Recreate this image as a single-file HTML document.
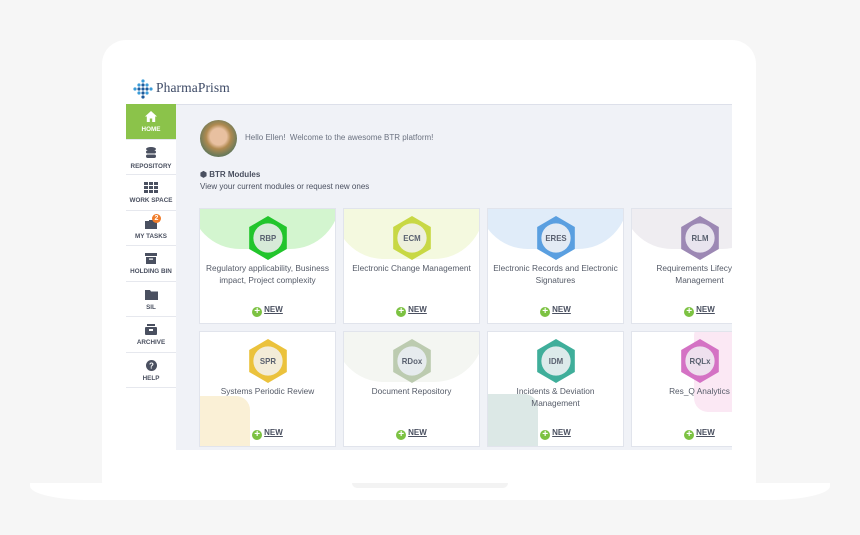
<!DOCTYPE html>
<html><head><meta charset="utf-8"><style>
*{margin:0;padding:0;box-sizing:border-box}
body{width:860px;height:535px;background:#f6f6f6;position:relative;overflow:hidden;font-family:"Liberation Sans",sans-serif;color:#5a6170}
.abs{position:absolute}
.lap{left:102px;top:40px;width:654px;height:446px;background:#fff;border-radius:24px 24px 4px 4px}
.base{left:30px;top:483px;width:800px;height:17px;background:#fff;border-radius:0 0 60px 60px/0 0 14px 14px}
.notch{left:352px;top:483px;width:156px;height:5px;background:#f3f3f3;border-radius:0 0 10px 10px}
.screenbg{left:176px;top:104px;width:556px;height:346px;background:#f0f2f7;border-top:1px solid #dde0ea}
.side{left:126px;top:104px;width:50px}
.si{height:35.5px;border-bottom:1px solid #e6e8ee;text-align:center;font-size:6.3px;font-weight:bold;color:#4a5060;padding-top:7px;position:relative;background:#fff}
.si.on{background:#8bc34a;color:#fff}
.si svg{display:block;margin:0 auto 4px}
.card{position:absolute;width:137px;height:116px;background:#fff;border:1px solid #e1e4ec;overflow:hidden}
.card .lbl{position:absolute;left:0;right:0;top:54px;text-align:center;font-size:8.3px;line-height:11.5px;color:#555b68;padding:0 4px}
.card .new{position:absolute;left:0;right:0;top:96px;text-align:center;font-size:8px;font-weight:bold;color:#4a5060}
.card .new span{text-decoration:underline}
.card .pl{display:inline-block;width:10px;height:10px;border-radius:50%;background:#7cc242;color:#fff;font-size:10px;line-height:10px;vertical-align:-2px;margin-right:2px;text-decoration:none!important}
.hx{position:absolute;left:47px;top:6px}
</style></head><body>
<div class="abs lap"></div>
<div class="abs base"></div>
<div class="abs notch"></div>
<svg class="abs" style="left:133px;top:79px" width="20" height="20" viewBox="0 0 20 20">
<g fill="#3a9bd8"><circle cx="10" cy="2" r="1.6"/><circle cx="6" cy="6" r="1.6"/><circle cx="14" cy="6" r="1.6"/><circle cx="2" cy="10" r="1.6"/><circle cx="18" cy="10" r="1.6"/><circle cx="6" cy="14" r="1.6"/><circle cx="14" cy="14" r="1.6"/></g>
<g fill="#1f5a9a"><circle cx="10" cy="6" r="1.6"/><circle cx="6" cy="10" r="1.6"/><circle cx="10" cy="10" r="1.6"/><circle cx="14" cy="10" r="1.6"/><circle cx="10" cy="14" r="1.6"/><circle cx="10" cy="18" r="1.6"/></g></svg>
<div class="abs" style="left:156px;top:80px;font-family:'Liberation Serif',serif;font-size:13.5px;color:#3d4a66;letter-spacing:0.1px">PharmaPrism</div>
<div class="abs screenbg"></div>
<div class="abs side">
<div class="si on"><svg width="12" height="11" viewBox="0 0 12 11"><path d="M6 0L0 5.5h1.8V11h3V7.5h2.4V11h3V5.5H12z" fill="#fff"/></svg>HOME</div>
<div class="si"><svg width="10" height="12" viewBox="0 0 10 12"><g fill="#4a5060"><ellipse cx="5" cy="2" rx="5" ry="2"/><rect x="0" y="3.5" width="10" height="3" rx="1.5"/><rect x="0" y="7.5" width="10" height="3.5" rx="1.7"/></g></svg>REPOSITORY</div>
<div class="si"><svg width="14" height="11" viewBox="0 0 14 11"><g fill="#4a5060"><rect x="0" y="0" width="4" height="3"/><rect x="5" y="0" width="4" height="3"/><rect x="10" y="0" width="4" height="3"/><rect x="0" y="4" width="4" height="3"/><rect x="5" y="4" width="4" height="3"/><rect x="10" y="4" width="4" height="3"/><rect x="0" y="8" width="4" height="3"/><rect x="5" y="8" width="4" height="3"/><rect x="10" y="8" width="4" height="3"/></g></svg>WORK SPACE</div>
<div class="si"><svg width="12" height="11" viewBox="0 0 12 11"><path d="M4 2h4v1h4v8H0V3h4z" fill="#4a5060"/></svg>MY TASKS<div style="position:absolute;left:26px;top:3px;width:9px;height:9px;border-radius:50%;background:#f07c2a;color:#fff;font-size:7px;line-height:9px">2</div></div>
<div class="si"><svg width="12" height="11" viewBox="0 0 12 11"><g fill="#4a5060"><rect x="0" y="0" width="12" height="3"/><rect x="1" y="4" width="10" height="7"/></g><rect x="4" y="5.5" width="4" height="1.2" fill="#fff"/></svg>HOLDING BIN</div>
<div class="si"><svg width="13" height="11" viewBox="0 0 13 11"><path d="M0 1h5l1 1.5h7V11H0z" fill="#4a5060"/></svg>SIL</div>
<div class="si"><svg width="12" height="11" viewBox="0 0 12 11"><g fill="#4a5060"><rect x="2" y="0" width="8" height="2"/><rect x="0" y="3" width="12" height="8" rx="1"/></g><rect x="4" y="5" width="4" height="2" fill="#fff"/></svg>ARCHIVE</div>
<div class="si"><svg width="11" height="11" viewBox="0 0 11 11"><circle cx="5.5" cy="5.5" r="5.5" fill="#4a5060"/><text x="5.5" y="8.5" font-size="8" font-weight="bold" fill="#fff" text-anchor="middle" font-family="Liberation Sans">?</text></svg>HELP</div>
</div>
<div class="abs" style="left:200px;top:120px;width:37px;height:37px;border-radius:50%;background:radial-gradient(circle at 50% 45%,#e8c0a0 0 30%,#b08a50 45%,#6a7a5a 70%,#4a5a4a)"></div>
<div class="abs" style="left:245px;top:133px;font-size:8px;color:#6b7280">Hello Ellen! &nbsp;Welcome to the awesome BTR platform!</div>
<div class="abs" style="left:200px;top:170px;font-size:8px;font-weight:bold;color:#4a5060">⬢ BTR Modules</div>
<div class="abs" style="left:200px;top:182px;font-size:8px;color:#4a5060">View your current modules or request new ones</div>

<div class="abs" style="left:176px;top:104px;width:556px;height:346px;overflow:hidden">
<div class="card" style="left:23px;top:104px"><div style="position:absolute;left:-10px;top:-20px;width:150px;height:60px;background:#d3f5cf;border-radius:0 0 50px 50px"></div>
<svg class="hx" width="42" height="46" viewBox="0 0 40 44"><path d="M20 1L38 11.5V32.5L20 43L2 32.5V11.5z" fill="#22c52c"/><circle cx="20" cy="22" r="14" fill="#d7ead8"/><text x="20" y="25" font-size="7.5" font-weight="bold" fill="#5a6170" text-anchor="middle" font-family="Liberation Sans">RBP</text></svg>
<div class="lbl">Regulatory applicability, Business impact, Project complexity</div><div class="new"><b class="pl">+</b><span>NEW</span></div></div>
<div class="card" style="left:167px;top:104px"><div style="position:absolute;left:-10px;top:-20px;width:150px;height:70px;background:#f4f9df;border-radius:0 0 50px 50px"></div>
<svg class="hx" width="42" height="46" viewBox="0 0 40 44"><path d="M20 1L38 11.5V32.5L20 43L2 32.5V11.5z" fill="#c8d844"/><circle cx="20" cy="22" r="14" fill="#eef0dc"/><text x="20" y="25" font-size="7.5" font-weight="bold" fill="#5a6170" text-anchor="middle" font-family="Liberation Sans">ECM</text></svg>
<div class="lbl">Electronic Change Management</div><div class="new"><b class="pl">+</b><span>NEW</span></div></div>
<div class="card" style="left:311px;top:104px"><div style="position:absolute;left:-10px;top:-20px;width:150px;height:60px;background:#e0ecf9;border-radius:0 0 50px 50px"></div>
<svg class="hx" width="42" height="46" viewBox="0 0 40 44"><path d="M20 1L38 11.5V32.5L20 43L2 32.5V11.5z" fill="#5a9fe0"/><circle cx="20" cy="22" r="14" fill="#e3ebf4"/><text x="20" y="25" font-size="7.5" font-weight="bold" fill="#5a6170" text-anchor="middle" font-family="Liberation Sans">ERES</text></svg>
<div class="lbl">Electronic Records and Electronic Signatures</div><div class="new"><b class="pl">+</b><span>NEW</span></div></div>
<div class="card" style="left:455px;top:104px"><div style="position:absolute;left:-10px;top:-20px;width:150px;height:60px;background:#efedf1;border-radius:0 0 50px 50px"></div>
<svg class="hx" width="42" height="46" viewBox="0 0 40 44"><path d="M20 1L38 11.5V32.5L20 43L2 32.5V11.5z" fill="#9c88b4"/><circle cx="20" cy="22" r="14" fill="#e8e4ee"/><text x="20" y="25" font-size="7.5" font-weight="bold" fill="#5a6170" text-anchor="middle" font-family="Liberation Sans">RLM</text></svg>
<div class="lbl" style="white-space:nowrap">Requirements Lifecycle<br>Management</div><div class="new"><b class="pl">+</b><span>NEW</span></div></div>
<div class="card" style="left:23px;top:227px"><div style="position:absolute;left:-20px;top:64px;width:70px;height:70px;background:#faf0d6;border-radius:14px"></div>
<svg class="hx" width="42" height="46" viewBox="0 0 40 44"><path d="M20 1L38 11.5V32.5L20 43L2 32.5V11.5z" fill="#ebc23c"/><circle cx="20" cy="22" r="14" fill="#f3ecd8"/><text x="20" y="25" font-size="7.5" font-weight="bold" fill="#5a6170" text-anchor="middle" font-family="Liberation Sans">SPR</text></svg>
<div class="lbl">Systems Periodic Review</div><div class="new"><b class="pl">+</b><span>NEW</span></div></div>
<div class="card" style="left:167px;top:227px"><div style="position:absolute;left:-10px;top:-20px;width:150px;height:70px;background:#f4f6f2;border-radius:0 0 50px 50px"></div>
<svg class="hx" width="42" height="46" viewBox="0 0 40 44"><path d="M20 1L38 11.5V32.5L20 43L2 32.5V11.5z" fill="#bccbb0"/><circle cx="20" cy="22" r="14" fill="#e6ebee"/><text x="20" y="25" font-size="7.5" font-weight="bold" fill="#5a6170" text-anchor="middle" font-family="Liberation Sans">RDox</text></svg>
<div class="lbl">Document Repository</div><div class="new"><b class="pl">+</b><span>NEW</span></div></div>
<div class="card" style="left:311px;top:227px"><div style="position:absolute;left:-20px;top:62px;width:70px;height:70px;background:#dce8e6;border-radius:14px"></div>
<svg class="hx" width="42" height="46" viewBox="0 0 40 44"><path d="M20 1L38 11.5V32.5L20 43L2 32.5V11.5z" fill="#3fae9a"/><circle cx="20" cy="22" r="14" fill="#dceaea"/><text x="20" y="25" font-size="7.5" font-weight="bold" fill="#5a6170" text-anchor="middle" font-family="Liberation Sans">IDM</text></svg>
<div class="lbl" style="padding:0 22px">Incidents &amp; Deviation Management</div><div class="new"><b class="pl">+</b><span>NEW</span></div></div>
<div class="card" style="left:455px;top:227px"><div style="position:absolute;left:62px;top:-10px;width:80px;height:90px;background:#fbe8f4;border-radius:14px"></div>
<svg class="hx" width="42" height="46" viewBox="0 0 40 44"><path d="M20 1L38 11.5V32.5L20 43L2 32.5V11.5z" fill="#d472c4"/><circle cx="20" cy="22" r="14" fill="#eee0ee"/><text x="20" y="25" font-size="7.5" font-weight="bold" fill="#5a6170" text-anchor="middle" font-family="Liberation Sans">RQLx</text></svg>
<div class="lbl">Res_Q Analytics</div><div class="new"><b class="pl">+</b><span>NEW</span></div></div>
</div>
</body></html>
